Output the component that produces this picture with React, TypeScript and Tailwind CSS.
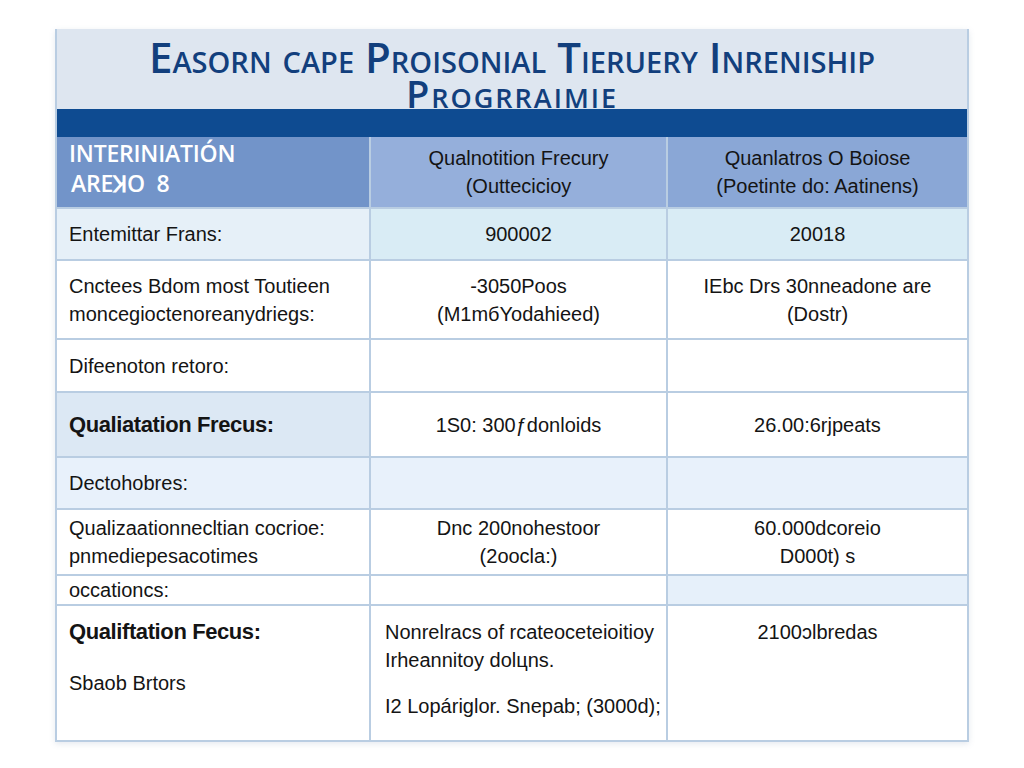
const rows: {
  h: string;
  bg: [string, string, string];
  c1: string[];
  c1Bold?: boolean;
  c2: string[];
  c3: string[];
}[] = [
  {
    h: "h-[52px]",
    bg: ["bg-[#e6f0f8]", "bg-[#d9ecf5]", "bg-[#d9ecf5]"],
    c1: ["Entemittar Frans:"],
    c2: ["900002"],
    c3: ["20018"],
  },
  {
    h: "h-[79px]",
    bg: ["bg-white", "bg-white", "bg-white"],
    c1: ["Cnctees Bdom most Toutieen", "moncegioctenoreanydriegs:"],
    c2: ["-3050Poos", "(M1mбYodahieed)"],
    c3: ["IEbc Drs 30nneadone are", "(Dostr)"],
  },
  {
    h: "h-[53px]",
    bg: ["bg-white", "bg-white", "bg-white"],
    c1: ["Difeenoton retoro:"],
    c2: [],
    c3: [],
  },
  {
    h: "h-[65px]",
    bg: ["bg-[#dce8f4]", "bg-white", "bg-white"],
    c1: ["Qualiatation Frecus:"],
    c1Bold: true,
    c2: ["1S0: 300ƒdonloids"],
    c3: ["26.00:6rjpeats"],
  },
  {
    h: "h-[52px]",
    bg: ["bg-[#e8f1fb]", "bg-[#e8f1fb]", "bg-[#e8f1fb]"],
    c1: ["Dectohobres:"],
    c2: [],
    c3: [],
  },
  {
    h: "h-[66px]",
    bg: ["bg-white", "bg-white", "bg-white"],
    c1: ["Qualizaationnecltian cocrioe:", "pnmediepesacotimes"],
    c2: ["Dnc 200nohestoor", "(2oocla:)"],
    c3: ["60.000dcoreio", "D000t) s"],
  },
  {
    h: "h-[30px]",
    bg: ["bg-white", "bg-white", "bg-[#e6f0fa]"],
    c1: ["occationcs:"],
    c2: [],
    c3: [],
  },
];

const border = "border-[#b9cde2]";

export default function App() {
  return (
    <div className="h-[768px] w-[1024px] bg-white pt-[29px] font-['Liberation_Sans',Arial,sans-serif] text-[#141414]">
      <div className={`mx-auto w-[914px] border-x-2 border-b-2 ${border} shadow-[0_2px_6px_rgba(80,110,150,0.15)]`}>
        {/* title */}
        <div className="h-[80px] bg-[#dee6f0] pt-[6px] text-center font-['Open_Sans',sans-serif] font-semibold text-[#123f7d] [font-variant:small-caps]">
          <div className="text-[42px] leading-[44px]">Easorn cape Proisonial Tieruery Inreniship</div>
          <div className="text-[38px] leading-[28px] tracking-[2px]">Progrraimie</div>
        </div>
        <div className="h-[28px] bg-[#0e4b91]" />

        {/* header */}
        <div className="grid h-[70px] grid-cols-[314px_297px_299px]">
          <div className={`border-r-2 ${border} bg-[#7294c9] pl-[12px] pt-[1px] font-['Open_Sans',sans-serif] text-[23px] font-semibold leading-[30px] tracking-[-0.2px] text-white`}>
            <div>INTERINIATIÓN</div>
            <div className="pl-[2px]">AREꞰO&nbsp; 8</div>
          </div>
          <div className={`flex flex-col items-center justify-center border-r-2 ${border} bg-[#95afdb] text-[20px] leading-[28px]`}>
            <div>Qualnotition Frecury</div>
            <div>(Outtecicioy</div>
          </div>
          <div className="flex flex-col items-center justify-center bg-[#8aa7d6] text-[20px] leading-[28px]">
            <div>Quanlatros O Boiose</div>
            <div>(Poetinte do: Aatinens)</div>
          </div>
        </div>

        {rows.map((r, i) => (
          <div key={i} className={`grid grid-cols-[314px_297px_299px] border-t-2 ${border} ${r.h}`}>
            <div
              className={`flex flex-col justify-center border-r-2 ${border} ${r.bg[0]} pl-[12px] leading-[28px] ${
                r.c1Bold ? "text-[22px] font-bold tracking-[-0.4px]" : "text-[20px]"
              }`}
            >
              {r.c1.map((t) => (
                <div key={t}>{t}</div>
              ))}
            </div>
            <div className={`flex flex-col items-center justify-center border-r-2 ${border} ${r.bg[1]} text-[20px] leading-[28px]`}>
              {r.c2.map((t) => (
                <div key={t}>{t}</div>
              ))}
            </div>
            <div className={`flex flex-col items-center justify-center ${r.bg[2]} text-[20px] leading-[28px]`}>
              {r.c3.map((t) => (
                <div key={t}>{t}</div>
              ))}
            </div>
          </div>
        ))}

        {/* last row */}
        <div className={`grid h-[136px] grid-cols-[314px_297px_299px] border-t-2 ${border}`}>
          <div className={`border-r-2 ${border} pl-[12px] pt-[12px] text-[20px]`}>
            <div className="text-[22px] font-bold leading-[28px] tracking-[-0.4px]">Qualiftation Fecus:</div>
            <div className="mt-[23px] leading-[28px]">Sbaob Brtors</div>
          </div>
          <div className={`border-r-2 ${border} pl-[14px] pt-[12px] text-[20px] leading-[28px]`}>
            <div>Nonrelracs of rcateoceteioitioy</div>
            <div>Irheannitoy dolцns.</div>
            <div className="mt-[18px]">I2 Lopáriglor. Snepab; (3000d);</div>
          </div>
          <div className="pt-[12px] text-center text-[20px] leading-[28px]">2100ↄlbredas</div>
        </div>
      </div>
    </div>
  );
}
